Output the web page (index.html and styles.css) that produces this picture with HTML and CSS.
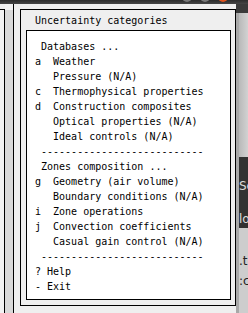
FILE: index.html
```html
<!DOCTYPE html>
<html lang="en">

<head>
  <meta charset="UTF-8">
  <meta name="viewport" content="width=device-width, initial-scale=1.0">
  <title> Uncertainty categories </title>
  <link rel="stylesheet" href="styles.css">
</head>

<body>
  <div class="topbar">
    <span class="knob"></span>
    <span class="knob"></span>
    <span class="knob close"></span>
  </div>
  <div class="desk">
    <div class="side">
      <div class="side-a"></div>
      <div class="side-b"></div>
      <div class="side-c"></div>
    </div>
    <div class="window">
      <div class="title">Uncertainty categories</div>
      <div class="menu">
        <div class="item"> Databases ...</div>
        <div class="item">a  Weather</div>
        <div class="item">   Pressure (N/A)</div>
        <div class="item">c  Thermophysical properties</div>
        <div class="item">d  Construction composites</div>
        <div class="item">   Optical properties (N/A)</div>
        <div class="item">   Ideal controls (N/A)</div>
        <div class="item"> ---------------------------</div>
        <div class="item"> Zones composition ...</div>
        <div class="item">g  Geometry (air volume)</div>
        <div class="item">   Boundary conditions (N/A)</div>
        <div class="item">i  Zone operations</div>
        <div class="item">j  Convection coefficients</div>
        <div class="item">   Casual gain control (N/A)</div>
        <div class="item"> ---------------------------</div>
        <div class="item">? Help</div>
        <div class="item">- Exit</div>
      </div>
    </div>
    <div class="behind">
      <div class="edge"></div>
      <div class="apps">
        <div class="app-top"></div>
        <div class="app-grey"></div>
        <div class="app-dark">
          <span>Se</span>
          <span>lo</span>
        </div>
        <div class="app-light">
          <span>.t</span>
          <span>:c</span>
        </div>
      </div>
    </div>
  </div>
</body>

</html>
```

FILE: styles.css
```css
* {
  margin: 0;
  padding: 0;
  box-sizing: border-box;
}

body {
  width: 248px;
  height: 313px;
  overflow: hidden;
  background-color: #efefef;
  font-family: "DejaVu Sans Mono", "Liberation Mono", monospace;
  font-size: 10px;
  color: #000;
}

.topbar {
  display: flex;
  justify-content: flex-end;
  gap: 8px;
  height: 4px;
  padding-right: 20px;
  overflow: hidden;
  background: linear-gradient(#2c2c2c, #454545);
}

.knob {
  width: 10px;
  height: 10px;
  margin-top: -8px;
  border-radius: 50%;
  background-color: #7a7a7a;
}

.knob.close {
  background-color: #e0541f;
}

.desk {
  display: flex;
  height: 309px;
}

/* 左侧 其他窗口的边缘 */
.side {
  display: flex;
  width: 20px;
}

.side-a {
  width: 5px;
  margin-top: 5px;
  border-top: 1px solid #000;
  border-right: 1px solid #000;
  background-color: #f2f2f2;
}

.side-b {
  width: 9px;
  border-right: 1px solid #000;
  background: linear-gradient(#f2f2f2 6px, #d9d9d9 6px);
}

.side-c {
  width: 6px;
  background-color: #efefef;
}

.window {
  display: flex;
  flex-direction: column;
  width: 216px;
  height: 297px;
  margin-top: 5px;
  padding: 3px 4px 5px 5px;
  border: 1px solid #000;
  background-color: #efefef;
}

.title {
  height: 15px;
  line-height: 15px;
  margin: 0 0 2px 9px;
  white-space: pre;
}

.menu {
  flex: 1;
  padding: 8px 0 0 8px;
  border: 1px solid #000;
  background-color: #fff;
}

.item {
  height: 15px;
  line-height: 15px;
  white-space: pre;
}

/* 右侧 后面的窗口 */
.behind {
  display: flex;
  width: 12px;
}

.edge {
  width: 3px;
  background: linear-gradient(#3a3a3a 9px, #a8a8a8 9px);
}

.apps {
  display: flex;
  flex-direction: column;
  width: 9px;
  overflow: hidden;
  font-family: "DejaVu Sans", sans-serif;
  font-size: 12px;
}

.app-top {
  height: 9px;
  background-color: #3a3a3a;
}

.app-grey {
  height: 144px;
  background: linear-gradient(90deg, #b9b9b9, #d2d2d2);
}

.app-dark {
  display: flex;
  flex-direction: column;
  gap: 19px;
  height: 71px;
  padding-top: 22px;
  background-color: #323232;
  color: #dcdcdc;
  line-height: 14px;
}

.app-light {
  display: flex;
  flex-direction: column;
  gap: 6px;
  flex: 1;
  padding-top: 26px;
  background-color: #cdcdcd;
  color: #222;
  line-height: 14px;
}
```
